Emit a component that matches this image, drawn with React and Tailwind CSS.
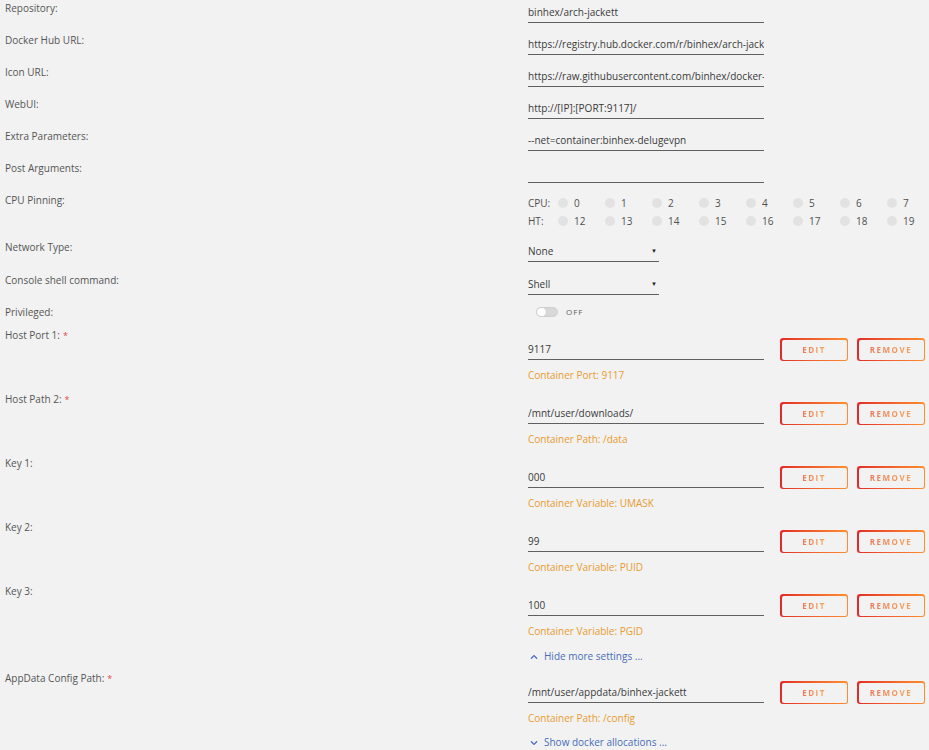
import React from "react";
import { FaChevronUp, FaChevronDown } from "react-icons/fa";

const font = { fontFamily: '"Open Sans", "Noto Sans", sans-serif' };

function Label({ children, req }) {
  return (
    <div className="w-[528px] shrink-0 pl-[5px] pt-[2px] text-[10px] leading-[13px] text-[#555555]">
      {children}
      {req && <span className="ml-[3px] align-top text-[9px] text-[#e04848]">*</span>}
    </div>
  );
}

function Input({ value }) {
  return (
    <div className="w-[236px] h-[23px] border-b border-[#606060] pt-[6px] text-[10px] leading-[13px] text-[#3a3a3a] whitespace-nowrap overflow-hidden">
      {value}
    </div>
  );
}

function Select({ value }) {
  return (
    <div className="w-[131px] h-[23px] border-b border-[#606060] pt-[6px] text-[10px] leading-[13px] text-[#3a3a3a] flex justify-between pr-[2px]">
      <span>{value}</span>
      <span className="text-[6px] leading-[13px] text-[#222]">▼</span>
    </div>
  );
}

function TextRow({ label, value }) {
  return (
    <div className="flex h-[32px]">
      <Label>{label}</Label>
      <Input value={value} />
    </div>
  );
}

function GButton({ children }) {
  return (
    <div className="rounded-[3px] bg-gradient-to-r from-[#e22828] to-[#ff8c2f] p-[1.5px]">
      <div className="flex h-[20px] w-[65px] items-center justify-center rounded-[2px] bg-[#f2f2f2]">
        <span className="bg-gradient-to-r from-[#e8785a] to-[#f5a55a] bg-clip-text text-[8px] font-bold tracking-[1.5px] text-transparent">
          {children}
        </span>
      </div>
    </div>
  );
}

function Mapping({ label, value, desc, req }) {
  return (
    <div className="flex h-[64px]">
      <Label req={req}>{label}</Label>
      <div className="pt-[10px]">
        <div className="flex items-end">
          <Input value={value} />
          <div className="ml-[16px] flex gap-[9px] mb-[-1px]">
            <GButton>EDIT</GButton>
            <GButton>REMOVE</GButton>
          </div>
        </div>
        <div className="mt-[9px] text-[10px] leading-[13px] text-[#e89b2e]">{desc}</div>
      </div>
    </div>
  );
}

function Cpu({ label, nums }) {
  return (
    <div className="flex h-[18px] items-center text-[10px] leading-[13px] text-[#505050]">
      <span className="w-[30px]">{label}</span>
      {nums.map((n) => (
        <div key={n} className="flex w-[47px] items-center">
          <span className="h-[10px] w-[10px] rounded-full bg-[#e2e2e2]" />
          <span className="ml-[6px]">{n}</span>
        </div>
      ))}
    </div>
  );
}

export default function App() {
  return (
    <div className="min-h-[750px] w-[929px] overflow-hidden bg-[#f2f2f2]" style={font}>
      <TextRow label="Repository:" value="binhex/arch-jackett" />
      <TextRow label="Docker Hub URL:" value="https://registry.hub.docker.com/r/binhex/arch-jackett/" />
      <TextRow label="Icon URL:" value="https://raw.githubusercontent.com/binhex/docker-templates/master/binhex/images/jackett-icon.png" />
      <TextRow label="WebUI:" value="http://[IP]:[PORT:9117]/" />
      <TextRow label="Extra Parameters:" value="--net=container:binhex-delugevpn" />
      <TextRow label="Post Arguments:" value="" />
      <div className="flex h-[47px]">
        <Label>CPU Pinning:</Label>
        <div className="pt-[2px]">
          <Cpu label="CPU:" nums={[0, 1, 2, 3, 4, 5, 6, 7]} />
          <Cpu label="HT:" nums={[12, 13, 14, 15, 16, 17, 18, 19]} />
        </div>
      </div>
      <div className="flex h-[33px]">
        <Label>Network Type:</Label>
        <Select value="None" />
      </div>
      <div className="flex h-[32px]">
        <Label>Console shell command:</Label>
        <Select value="Shell" />
      </div>
      <div className="flex h-[23px]">
        <Label>Privileged:</Label>
        <div className="flex items-center pl-[8px] pt-[2px] h-[14px]">
          <div className="flex h-[10px] w-[22px] items-center rounded-full border border-[#d0d0d0] bg-[#d8d8d8]">
            <span className="h-[10px] w-[11px] rounded-full bg-white border border-[#d0d0d0] ml-[-1px]" />
          </div>
          <span className="ml-[8px] text-[8px] tracking-[1px] text-[#606060]">OFF</span>
        </div>
      </div>
      <Mapping req label="Host Port 1:" value="9117" desc="Container Port: 9117" />
      <Mapping req label="Host Path 2:" value="/mnt/user/downloads/" desc="Container Path: /data" />
      <Mapping label="Key 1:" value="000" desc="Container Variable: UMASK" />
      <Mapping label="Key 2:" value="99" desc="Container Variable: PUID" />
      <Mapping label="Key 3:" value="100" desc="Container Variable: PGID" />
      <div className="flex h-[23px]">
        <div className="w-[528px] shrink-0" />
        <div className="flex items-center pt-[2px] h-[17px] pl-[2px] text-[10px] leading-[13px] text-[#486dba]">
          <FaChevronUp className="h-[8px] w-[8px]" />
          <span className="ml-[6px]">Hide more settings ...</span>
        </div>
      </div>
      <Mapping req label="AppData Config Path:" value="/mnt/user/appdata/binhex-jackett" desc="Container Path: /config" />
      <div className="flex h-[23px]">
        <div className="w-[528px] shrink-0" />
        <div className="flex items-center h-[17px] pl-[2px] text-[10px] leading-[13px] text-[#486dba]">
          <FaChevronDown className="h-[8px] w-[8px]" />
          <span className="ml-[6px]">Show docker allocations ...</span>
        </div>
      </div>
    </div>
  );
}
